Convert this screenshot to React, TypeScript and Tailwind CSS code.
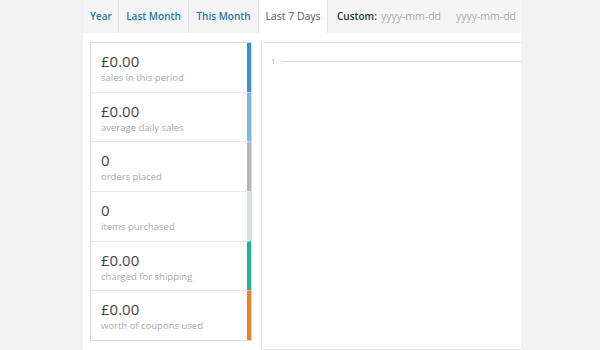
const tabs = [
  { label: "Year", active: false, w: "w-[35px]" },
  { label: "Last Month", active: false, w: "w-[70px]" },
  { label: "This Month", active: false, w: "w-[70px]" },
  { label: "Last 7 Days", active: true, w: "w-[69px]" },
];

const stats = [
  { value: "£0.00", label: "sales in this period", bar: "border-r-[#3b8fd0]" },
  { value: "£0.00", label: "average daily sales", bar: "border-r-[#7db6e2]" },
  { value: "0", label: "orders placed", bar: "border-r-[#b4b7b9]" },
  { value: "0", label: "items purchased", bar: "border-r-[#d9dfe1]" },
  { value: "£0.00", label: "charged for shipping", bar: "border-r-[#22b397]" },
  { value: "£0.00", label: "worth of coupons used", bar: "border-r-[#e6822e]" },
];

export default function App() {
  return (
    <div className="w-[600px] h-[350px] overflow-hidden bg-[#f1f1f1] font-['Open_Sans',sans-serif]">
      <div className="ml-[83px] w-[438px]">
        {/* Range tabs */}
        <div className="flex h-[33px] ml-px bg-[#f5f5f5] whitespace-nowrap">
          {tabs.map((t) => (
            <div
              key={t.label}
              className={
                t.active
                  ? `${t.w} flex items-center justify-center bg-white text-[10.5px] text-[#555] border-r border-[#e5e5e5]`
                  : `${t.w} flex items-center justify-center text-[10px] font-semibold text-[#1e77a8] border-r border-[#e5e5e5]`
              }
            >
              {t.label}
            </div>
          ))}
          <div className="flex items-center pl-[9px]">
            <span className="text-[10px] font-semibold text-[#333]">Custom:</span>
            <span className="ml-[4px] w-[75px] text-[10.5px] text-[#aaa]">yyyy-mm-dd</span>
            <span className="text-[10.5px] text-[#aaa]">yyyy-mm-dd</span>
          </div>
        </div>

        {/* Report body */}
        <div className="flex bg-white h-[317px] pl-[7px] pt-[9px] gap-[9px]">
          <div className="w-[162px] h-[299px] border border-[#dcdcdc] flex flex-col">
            {stats.map((s, i) => (
              <div
                key={i}
                className={`flex-1 border-r-[4px] ${s.bar} ${i > 0 ? "border-t border-t-[#e8e8e8]" : ""} pl-[10px] pt-[8px] whitespace-nowrap`}
              >
                <div className="text-[15px] leading-[20px] text-[#444]">{s.value}</div>
                <div className="text-[9.5px] leading-[14px] text-[#aaa]">{s.label}</div>
              </div>
            ))}
          </div>
          <div className="flex-1 h-[308px] border-l border-t border-b border-[#e5e5e5] pt-[13px] pl-[9px]">
            <div className="flex items-center gap-[6px]">
              <span className="text-[8px] leading-[10px] text-[#aaa]">1</span>
              <div className="flex-1 h-px bg-[#dcdcdc]" />
            </div>
          </div>
        </div>
      </div>
    </div>
  );
}
